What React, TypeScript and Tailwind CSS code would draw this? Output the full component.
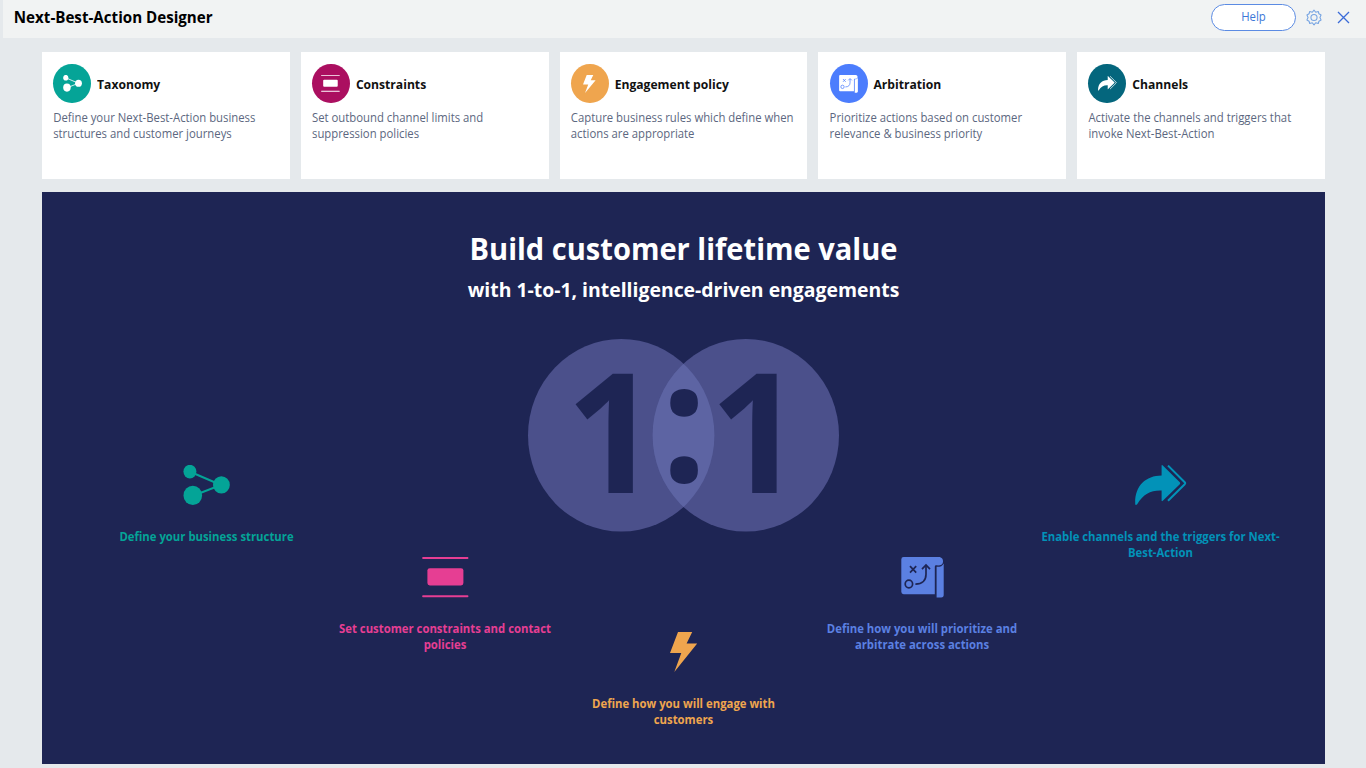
import React from "react";

type IconProps = { className?: string };

function TaxonomyIcon({ className }: IconProps) {
  return (
    <svg viewBox="0 0 47 41" preserveAspectRatio="none" className={className} fill="currentColor">
      <path d="M6.5 6.5 L38 20 L9.5 31" fill="none" stroke="currentColor" strokeWidth="2" />
      <ellipse cx="6.9" cy="6.6" rx="6.5" ry="6.8" />
      <ellipse cx="9.8" cy="30.4" rx="9.3" ry="9.7" />
      <ellipse cx="38.4" cy="19.9" rx="8.4" ry="8.7" />
    </svg>
  );
}

function ConstraintsIcon({ className }: IconProps) {
  return (
    <svg viewBox="0 0 47 41" preserveAspectRatio="none" className={className} fill="currentColor">
      <rect x="0.2" y="0" width="46.2" height="2" rx="0.8" />
      <rect x="5.4" y="11.2" width="36" height="17.2" rx="2.4" />
      <rect x="0.2" y="38.2" width="46.2" height="2" rx="0.8" />
    </svg>
  );
}

function BoltIcon({ className }: IconProps) {
  return (
    <svg viewBox="0 0 28 41" preserveAspectRatio="none" className={className} fill="currentColor">
      <path d="M8 0 H22.2 L16.6 11.6 H27.2 L4.3 40 L11.3 21 H0 Z" />
    </svg>
  );
}

function ArbitrationIcon({ className }: IconProps) {
  return (
    <svg viewBox="0 0 43 41" preserveAspectRatio="none" className={className}>
      <path
        fill="currentColor"
        d="M2.6 0 H37.5 C41 0 42.3 2.6 42 5 C41.6 8.2 38.8 8.6 35.2 8.3 C34.2 8.3 33.8 8.8 33.8 10 V37.2 H2.6 Q0.3 37.2 0.3 34.8 V2.4 Q0.3 0 2.6 0 Z"
      />
      <path
        fill="currentColor"
        d="M35.6 9.8 C39 10 41.4 9.2 42.7 6.4 V37.8 Q42.7 40.4 40.2 40.4 H35.6 Z"
      />
      <g fill="none" stroke="var(--ink)" strokeWidth="1.7">
        <path d="M9 9.2 L15.2 15.6 M15.2 9.2 L9 15.6" />
        <ellipse cx="7.9" cy="27" rx="3.7" ry="3.9" />
        <path d="M14.4 27.2 C21.5 27.2 25 23.3 25 17.3 V9" />
        <path d="M21 12.2 L25 8 L29 12.2" />
      </g>
    </svg>
  );
}

function ChannelsIcon({ className }: IconProps) {
  return (
    <svg viewBox="0 0 52 41" preserveAspectRatio="none" className={className} fill="currentColor">
      <path d="M26.6 0.8 Q26.6 -0.6 27.8 0.4 L44.8 17.2 Q45.6 18.2 44.8 19.2 L27.8 35.8 Q26.6 36.8 26.6 35.4 V25.6 C15.6 25.2 8.5 29.1 2.2 39.2 Q0.4 41 0.2 38.8 C-0.3 21.1 10.5 10.8 26.6 10.6 Z" />
      <path
        d="M33 0.6 L49.7 17.2 Q50.6 18.2 49.7 19.2 L33 35.8"
        fill="none"
        stroke="currentColor"
        strokeWidth="2"
      />
    </svg>
  );
}

const cards = [
  {
    title: "Taxonomy",
    text: "Define your Next-Best-Action business structures and customer journeys",
    disc: "bg-[#05a497]",
    icon: <TaxonomyIcon className="h-[17px] w-[19px]" />,
  },
  {
    title: "Constraints",
    text: "Set outbound channel limits and suppression policies",
    disc: "bg-[#ab0f60]",
    icon: <ConstraintsIcon className="h-[17px] w-[19px]" />,
  },
  {
    title: "Engagement policy",
    text: "Capture business rules which define when actions are appropriate",
    disc: "bg-[#efa54e]",
    icon: <BoltIcon className="mt-px h-[18.5px] w-[13px]" />,
  },
  {
    title: "Arbitration",
    text: "Prioritize actions based on customer relevance & business priority",
    disc: "bg-[#4c7dfd] [--ink:#4c7dfd]",
    icon: <ArbitrationIcon className="h-[18px] w-[19px]" />,
  },
  {
    title: "Channels",
    text: "Activate the channels and triggers that invoke Next-Best-Action",
    disc: "bg-[#04667d]",
    icon: <ChannelsIcon className="-mt-px h-[15px] w-[19px]" />,
  },
];

const steps = [
  {
    text: "Define your business structure",
    place: "text-[#04a497]",
    icon: <TaxonomyIcon className="h-[41px] w-[47px]" />,
  },
  {
    text: "Set customer constraints and contact policies",
    place: "mt-[92px] text-[#e63e93]",
    icon: <ConstraintsIcon className="h-[41px] w-[47px]" />,
  },
  {
    text: "Define how you will engage with customers",
    place: "mt-[167px] text-[#efa54e]",
    icon: <BoltIcon className="h-[41px] w-[28px]" />,
  },
  {
    text: "Define how you will prioritize and arbitrate across actions",
    place: "mt-[92px] text-[#5b80e2] [--ink:#1e2554]",
    icon: <ArbitrationIcon className="h-[41px] w-[43px]" />,
  },
  {
    text: "Enable channels and the triggers for Next-Best-Action",
    place: "text-[#0292b8]",
    icon: <ChannelsIcon className="h-[41px] w-[52px]" />,
  },
];

function OneToOne() {
  return (
    <svg viewBox="528 339 311 193" className="h-[193px] w-[311px] overflow-visible">
      <ellipse cx="621.2" cy="435.3" rx="93.2" ry="96.3" fill="#4b508b" />
      <ellipse cx="745.8" cy="435.3" rx="93.2" ry="96.3" fill="#4b508b" />
      <clipPath id="lens">
        <ellipse cx="621.2" cy="435.3" rx="93.2" ry="96.3" />
      </clipPath>
      <ellipse cx="745.8" cy="435.3" rx="93.2" ry="96.3" fill="#5d64a3" clipPath="url(#lens)" />
      <g className="text-[167.7px] font-bold" fill="#1e2554">
        <text transform="translate(566 493) scale(.965 1)">1</text>
        <text transform="translate(660.9 482) scale(.965 1)">:</text>
        <text transform="translate(709.8 493) scale(.965 1)">1</text>
      </g>
    </svg>
  );
}

function GearIcon() {
  return (
    <svg viewBox="0 0 24 24" className="h-[17px] w-4" fill="none" stroke="#76a4e2" strokeWidth="1.6" strokeLinejoin="round">
      <path d="M12 1 L14.6 4.1 L18.4 3 L19.4 6.4 L22.6 8.3 L20.9 12 L22.6 15.7 L19.4 17.6 L18.4 21 L14.6 19.9 L12 23 L9.4 19.9 L5.6 21 L4.6 17.6 L1.4 15.7 L3.1 12 L1.4 8.3 L4.6 6.4 L5.6 3 L9.4 4.1 Z" />
      <circle cx="12" cy="12" r="4.6" />
    </svg>
  );
}

export default function App() {
  return (
    <div className="h-screen overflow-hidden bg-[#e5e9ec] pl-[2.5px] font-['Open_Sans',sans-serif]">
      <header className="flex h-[38px] items-center justify-between bg-[#f1f3f3] pr-4 pb-[4px] pl-[11.3px]">
        <h1 className="scale-y-[1.035] text-[15.15px] font-bold text-black">Next-Best-Action Designer</h1>
        <div className="flex items-center">
          <button className="h-[27px] w-[85px] rounded-full border border-[#5b8be3] bg-white text-[11.4px] text-[#3d77d8]">
            <span className="block scale-y-[1.035]">Help</span>
          </button>
          <span className="ml-[9.5px]">
            <GearIcon />
          </span>
          <svg viewBox="0 0 13 13" className="ml-[15.5px] h-[13px] w-[13px]" fill="none" stroke="#3a6bd8" strokeWidth="1.3">
            <path d="M1 1 L12 12 M12 1 L1 12" />
          </svg>
        </div>
      </header>

      <main className="mr-[41px] ml-[39.5px]">
        <div className="grid grid-cols-5 gap-[11px] pt-[14.4px]">
          {cards.map((card) => (
            <section key={card.title} className="h-[127px] bg-white px-[11.2px] pt-[11.4px]">
              <div className="flex items-center">
                <span className={`flex h-[39.5px] w-[38px] items-center justify-center rounded-[50%] text-white ${card.disc}`}>
                  {card.icon}
                </span>
                <h2 className="mt-[3px] ml-[5.9px] scale-y-[1.035] text-[12.14px] font-bold text-[#111]">{card.title}</h2>
              </div>
              <p className="mt-[6.5px] -mr-2 scale-y-[1.035] text-[11.34px] leading-[16px] text-[#5c6780]">{card.text}</p>
            </section>
          ))}
        </div>

        <section className="mt-[12.4px] flex h-[571.8px] flex-col items-center bg-[#1e2554] text-white">
          <h2 className="mt-[37px] scale-y-[1.035] text-[29.07px] leading-[40px] font-bold">Build customer lifetime value</h2>
          <p className="mt-[8px] scale-y-[1.035] text-[19.42px] leading-[26px] font-bold">
            with 1-to-1, intelligence-driven engagements
          </p>
          <div className="mt-[36px]">
            <OneToOne />
          </div>
          <div className="-mt-[67px] grid w-[1192.5px] grid-cols-5 items-start">
            {steps.map((step) => (
              <div key={step.text} className={`flex flex-col items-center ${step.place}`}>
                {step.icon}
                <p className="-mx-2 mt-[23px] w-[241px] scale-y-[1.035] text-center text-[11.33px] leading-[16px] font-bold">
                  {step.text}
                </p>
              </div>
            ))}
          </div>
        </section>
      </main>
    </div>
  );
}
